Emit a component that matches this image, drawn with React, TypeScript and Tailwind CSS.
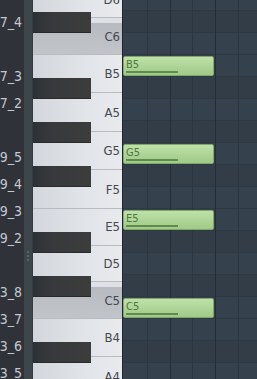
import React from "react";

const FONT = { fontFamily: '"DejaVu Sans Condensed", "Liberation Sans Narrow", "Liberation Sans", sans-serif' };

const listRows = ["7_4", "", "7_3", "7_2", "", "9_5", "9_4", "9_3", "9_2", "", "3_8", "3_7", "3_6", "3_5"];

type WK = { name: string; h: string; c?: boolean };
const whiteKeys: WK[] = [
  { name: "D6", h: "h-[36.667px]" },
  { name: "C6", h: "h-[36.667px]", c: true },
  { name: "B5", h: "h-[38.5px]" },
  { name: "A5", h: "h-[38.5px]" },
  { name: "G5", h: "h-[38.5px]" },
  { name: "F5", h: "h-[38.5px]" },
  { name: "E5", h: "h-[36.667px]" },
  { name: "D5", h: "h-[36.667px]" },
  { name: "C5", h: "h-[36.667px]", c: true },
  { name: "B4", h: "h-[38.5px]" },
  { name: "A4", h: "h-[38.5px]" },
];

const blackTops = [11, 77, 121, 165, 231, 275, 341];

const semis = ["D6", "C#6", "C6", "B5", "A#5", "A5", "G#5", "G5", "F#5", "F5", "E5", "D#5", "D5", "C#5", "C5", "B4", "A#4", "A4"];

const notes = [
  { name: "B5", top: 56 },
  { name: "G5", top: 144 },
  { name: "E5", top: 210 },
  { name: "C5", top: 298 },
];

export default function App() {
  return (
    <div className="w-[257px] h-[379px] overflow-hidden flex bg-[#2f3139]" style={FONT}>
      {/* left list */}
      <div className="w-[24px] h-full bg-[#303239] overflow-hidden flex flex-col pt-[8px]">
        {listRows.map((t, i) => (
          <div key={i} className="h-[27px] shrink-0 flex items-center justify-end pr-[2px] overflow-hidden">
            <span className="whitespace-nowrap text-[14px] leading-none text-[#c3c8cf]">{t}</span>
          </div>
        ))}
      </div>
      {/* separator */}
      <div className="w-[9px] h-full bg-[#3d464b] flex flex-col items-center justify-center border-r border-[#353c40]">
        <div className="mt-[132px] flex flex-col gap-[2px]">
          <div className="w-[2px] h-[2px] bg-[#566065]" />
          <div className="w-[2px] h-[2px] bg-[#566065]" />
          <div className="w-[2px] h-[2px] bg-[#566065]" />
        </div>
      </div>
      {/* piano keys */}
      <div className="relative w-[89px] h-full overflow-hidden">
        <div className="flex flex-col -mt-[18.333px]">
          {whiteKeys.map((k) => (
            <div
              key={k.name}
              className={`${k.h} shrink-0 flex items-center justify-end pr-[2px] border-b border-[#b8bcc2] ${
                k.c
                  ? "bg-[linear-gradient(to_bottom,#dde0e5_4.6px,#b7bbc1_4.6px,#c1c4c9)]"
                  : "bg-[linear-gradient(to_right,#d3d7dd,#e1e4e8_60%,#e8eaee)]"
              }`}
            >
              <span className="text-[13px] leading-none text-[#43474e]">{k.name}</span>
            </div>
          ))}
        </div>
        {blackTops.map((t) => (
          <div
            key={t}
            className="absolute left-0 w-[58px] h-[21px] bg-[linear-gradient(to_right,#2d3137,#38393b_35%,#3c3c3c)] border-b border-[#2a2a2a]"
            style={{ top: t + 1 }}
          />
        ))}
      </div>
      {/* divider */}
      <div className="w-[1px] h-full bg-[#1d262d]" />
      {/* grid */}
      <div className="relative flex-1 h-full overflow-hidden bg-[#34404b]">
        <div className="flex flex-col -mt-[11px]">
          {semis.map((s) => (
            <div
              key={s}
              className={`h-[22px] shrink-0 border-b border-[#2e3943] ${s.includes("#") ? "bg-[#323d48]" : "bg-[#35414c]"}`}
            />
          ))}
        </div>
        <div className="absolute inset-0 flex pointer-events-none">
          <div className="w-[25px] h-full border-r border-[#2c3641]" />
          <div className="w-[23px] h-full border-r border-[#252f39]" />
          <div className="w-[22px] h-full border-r border-[#2c3641]" />
          <div className="w-[23px] h-full border-r border-[#232d37]" />
          <div className="w-[23px] h-full border-r border-[#2c3641]" />
        </div>
        {notes.map((n) => (
          <div
            key={n.name}
            className="absolute left-0 w-[91px] h-[20px] rounded-[2px] border border-[#7ea869] bg-[linear-gradient(to_bottom,#bfe1a9,#abd394_60%,#a0ca88)]"
            style={{ top: n.top }}
          >
            <span className="absolute left-[2px] top-[2px] text-[11px] leading-none text-[#52763f]">{n.name}</span>
            <div className="absolute left-[2px] bottom-[2px] w-[52px] h-[2px] bg-[#5f8c4e]" />
          </div>
        ))}
      </div>
    </div>
  );
}
